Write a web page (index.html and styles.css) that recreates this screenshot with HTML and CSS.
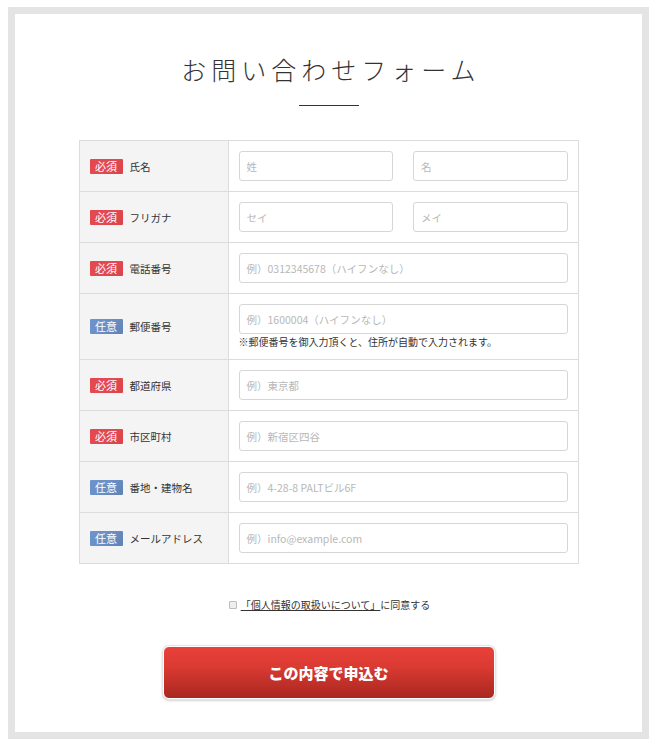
FILE: index.html
```html
<!DOCTYPE html>
<html lang="ja">
<head>
<meta charset="utf-8">
<title>お問い合わせフォーム</title>
<link rel="stylesheet" href="styles.css">
</head>
<body>
<div class="frame">
  <h1 class="title">お問い合わせフォーム</h1>
  <div class="title-line"></div>
  <div class="form-table">
    <div class="row">
      <div class="label"><span class="badge req">必須</span><span class="label-text">氏名</span></div>
      <div class="field two">
        <div class="input"><span class="ph">姓</span></div>
        <div class="input"><span class="ph">名</span></div>
      </div>
    </div>
    <div class="row">
      <div class="label"><span class="badge req">必須</span><span class="label-text">フリガナ</span></div>
      <div class="field two">
        <div class="input"><span class="ph">セイ</span></div>
        <div class="input"><span class="ph">メイ</span></div>
      </div>
    </div>
    <div class="row">
      <div class="label"><span class="badge req">必須</span><span class="label-text">電話番号</span></div>
      <div class="field">
        <div class="input"><span class="ph">例）0312345678（ハイフンなし）</span></div>
      </div>
    </div>
    <div class="row">
      <div class="label"><span class="badge opt">任意</span><span class="label-text">郵便番号</span></div>
      <div class="field">
        <div class="input"><span class="ph">例）1600004（ハイフンなし）</span></div>
        <p class="note">※郵便番号を御入力頂くと、住所が自動で入力されます。</p>
      </div>
    </div>
    <div class="row">
      <div class="label"><span class="badge req">必須</span><span class="label-text">都道府県</span></div>
      <div class="field">
        <div class="input"><span class="ph">例）東京都</span></div>
      </div>
    </div>
    <div class="row">
      <div class="label"><span class="badge req">必須</span><span class="label-text">市区町村</span></div>
      <div class="field">
        <div class="input"><span class="ph">例）新宿区四谷</span></div>
      </div>
    </div>
    <div class="row">
      <div class="label"><span class="badge opt">任意</span><span class="label-text">番地・建物名</span></div>
      <div class="field">
        <div class="input"><span class="ph">例）4-28-8 PALTビル6F</span></div>
      </div>
    </div>
    <div class="row">
      <div class="label"><span class="badge opt">任意</span><span class="label-text">メールアドレス</span></div>
      <div class="field">
        <div class="input"><span class="ph">例）info@example.com</span></div>
      </div>
    </div>
  </div>
  <div class="agree">
    <span class="checkbox"></span>
    <span class="agree-link">「個人情報の取扱いについて」</span><span class="agree-text">に同意する</span>
  </div>
  <div class="submit-wrap">
    <div class="submit">この内容で申込む</div>
  </div>
</div>
</body>
</html>
```

FILE: styles.css
```css
html, body {
  margin: 0;
  padding: 0;
  background: #ffffff;
}
body {
  padding: 7px 8px 0 8px;
  font-family: "Noto Sans CJK JP", "Noto Sans", sans-serif;
  color: #333;
}
.frame {
  border: 7px solid #e4e4e4;
  background: #fff;
  box-sizing: border-box;
  height: 732px;
  padding-top: 35px;
}
.title {
  margin: 0;
  text-align: center;
  font-size: 25px;
  font-weight: 300;
  letter-spacing: 5px;
  line-height: 40px;
  color: #333;
  padding-left: 5px;
}
.title-line {
  width: 60px;
  height: 1px;
  background: #333;
  margin: 16px auto 0;
}
.form-table {
  width: 500px;
  margin: 34px auto 0;
  border: 1px solid #dcdcdc;
  border-bottom: none;
  box-sizing: border-box;
}
.row {
  display: flex;
  border-bottom: 1px solid #dcdcdc;
}
.label {
  width: 149px;
  flex: none;
  background: #f4f4f4;
  border-right: 1px solid #dcdcdc;
  display: flex;
  align-items: center;
  padding-left: 10px;
  box-sizing: border-box;
}
.badge {
  display: inline-block;
  width: 33px;
  height: 15px;
  line-height: 15px;
  text-align: center;
  color: #fff;
  font-size: 11px;
  border-radius: 1px;
}
.badge.req {
  background: linear-gradient(135deg, #e6474e 0%, #e34a52 50%, #d9434a 100%);
}
.badge.opt {
  background: linear-gradient(135deg, #6d94cc 0%, #6a8fc4 50%, #5f82b4 100%);
}
.label-text {
  margin-left: 7px;
  font-size: 10.5px;
  color: #333;
}
.field {
  flex: 1;
  padding: 10px;
}
.field.two {
  display: flex;
  gap: 20px;
}
.field.two .input {
  flex: 1;
}
.input {
  height: 30px;
  box-sizing: border-box;
  border: 1px solid #d6d6d6;
  border-radius: 3px;
  display: flex;
  align-items: center;
  padding-left: 7px;
  background: #fff;
}
.ph {
  font-size: 10.5px;
  color: #b8b8b8;
}
.note {
  margin: 0;
  font-size: 10px;
  line-height: 15px;
  color: #333;
}
.agree {
  display: flex;
  justify-content: center;
  align-items: center;
  margin-top: 33px;
  font-size: 10px;
  line-height: 16px;
  padding-left: 2px;
}
.checkbox {
  width: 6px;
  height: 6px;
  border: 1px solid #bdbdbd;
  background: #eeeeee;
  border-radius: 1px;
  margin-right: 4px;
}
.agree-link {
  color: #333;
  text-decoration: underline;
}
.agree-text {
  color: #333;
}
.submit-wrap {
  display: flex;
  justify-content: center;
  margin-top: 33px;
}
.submit {
  width: 332px;
  height: 53px;
  box-sizing: border-box;
  border: 1px solid #fff;
  border-radius: 6px;
  box-shadow: 0 0 0 1px #e4e4e4, 0 1px 3px rgba(0,0,0,0.35);
  background: linear-gradient(to bottom, #e9413a 0%, #d93a32 40%, #a9271f 100%);
  color: #fff;
  font-weight: 900;
  font-size: 15px;
  display: flex;
  align-items: center;
  justify-content: center;
}
```
